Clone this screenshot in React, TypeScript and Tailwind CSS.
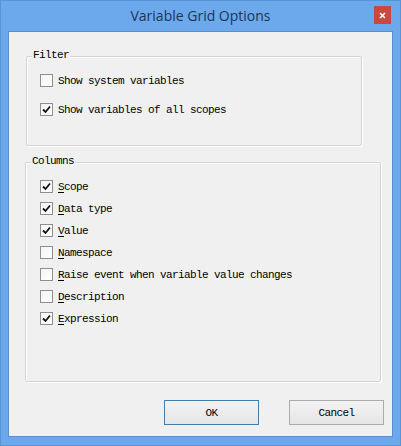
import React from 'react';

const mono = "font-['Liberation_Mono','DejaVu_Sans_Mono',monospace] text-[11px] tracking-[-0.6px] leading-[12px] text-black";

function CheckBox({ checked }: { checked?: boolean }) {
  return (
    <span className="flex h-[13px] w-[13px] shrink-0 items-center justify-center border border-[#8f8f8f] bg-[linear-gradient(135deg,#f4f4f4,#ffffff)]">
      {checked && (
        <svg width="9" height="9" viewBox="0 0 9 9">
          <path d="M1 4.5 L3.5 7 L8 1.5" fill="none" stroke="#111" strokeWidth="1.8" />
        </svg>
      )}
    </span>
  );
}

function Option({
  label,
  checked,
  hotkey,
}: {
  label: string;
  checked?: boolean;
  hotkey?: boolean;
}) {
  return (
    <div className="flex items-center gap-[5px]">
      <CheckBox checked={checked} />
      <span className={clsx(mono, 'whitespace-pre')}>
        {hotkey ? (
          <>
            <span className="underline underline-offset-[2px]">{label[0]}</span>
            {label.slice(1)}
          </>
        ) : (
          label
        )}
      </span>
    </div>
  );
}

function clsx(...c: string[]) {
  return c.join(' ');
}

function GroupBox({
  title,
  className,
  children,
}: {
  title: string;
  className: string;
  children: React.ReactNode;
}) {
  return (
    <div
      className={clsx(
        'relative rounded-[2px] border border-[#d5d5d5] shadow-[inset_1px_1px_0_#ffffff,1px_1px_0_#ffffff]',
        className
      )}
    >
      <span className={clsx(mono, 'absolute left-[5px] top-[-8px] bg-[#f0f0f0] px-[1px]')}>{title}</span>
      {children}
    </div>
  );
}

export default function App() {
  return (
    <div className="flex h-[446px] w-[401px] flex-col border border-[#5a93d6] bg-[#6ba8ec]">
      <div className="relative flex h-[30px] shrink-0 items-center justify-center">
        <span className="pb-[1px] font-['Open_Sans','Liberation_Sans',sans-serif] text-[14px] text-[#1c3656]">
          Variable Grid Options
        </span>
        <div className="absolute right-[9px] top-[5px] flex h-[18px] w-[17px] items-center justify-center bg-[#c9493d]">
          <svg width="7" height="7" viewBox="0 0 7 7">
            <path d="M1 1 L6 6 M6 1 L1 6" stroke="#fff" strokeWidth="1.6" />
          </svg>
        </div>
      </div>

      <div className="mx-[7px] mb-[8px] flex flex-1 flex-col border border-[#5b8ecb] bg-[#f0f0f0]">
        <GroupBox title="Filter" className="ml-[17px] mt-[24px] h-[90px] w-[336px]">
          <div className="flex flex-col gap-[16px] pl-[13px] pt-[17px]">
            <Option label="Show system variables" />
            <Option label="Show variables of all scopes" checked />
          </div>
        </GroupBox>

        <GroupBox title="Columns" className="ml-[16px] mt-[16px] h-[220px] w-[356px]">
          <div className="flex flex-col gap-[9px] pl-[14px] pt-[17px]">
            <Option label="Scope" checked hotkey />
            <Option label="Data type" checked hotkey />
            <Option label="Value" checked hotkey />
            <Option label="Namespace" hotkey />
            <Option label="Raise event when variable value changes" hotkey />
            <Option label="Description" hotkey />
            <Option label="Expression" checked hotkey />
          </div>
        </GroupBox>

        <div className="ml-[155px] mt-[18px] flex gap-[30px]">
          <button className={clsx(mono, 'h-[25px] w-[95px] border border-[#3c7fb1] bg-[linear-gradient(#f2f2f2,#e6e6e6)]')}>
            OK
          </button>
          <button className={clsx(mono, 'h-[25px] w-[95px] border border-[#acacac] bg-[linear-gradient(#f2f2f2,#e6e6e6)]')}>
            Cancel
          </button>
        </div>
      </div>
    </div>
  );
}
